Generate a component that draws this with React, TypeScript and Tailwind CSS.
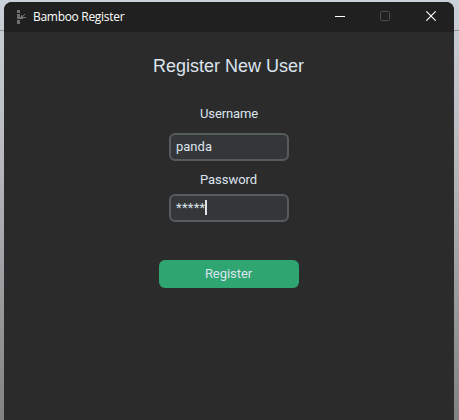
function AppIcon() {
  return (
    <svg width="9" height="14" viewBox="0 0 9 14" shapeRendering="crispEdges" aria-hidden="true">
      <path d="M0 0h3v3H0zM0 4h3v5H0zM0 10h3v4H0z" fill="#707070" />
      <path d="M3 7h6v1H3zM4 5h1v2H4zM5 6h1v1H5zM6 5h1v1H6zM7 4h1v1H7zM3 8h3v1H3z" fill="#777" />
    </svg>
  );
}

function TitleBar() {
  return (
    <header className="flex h-[30px] items-center bg-[#202020] pl-[13px]">
      <AppIcon />
      <h1 className="ml-[7px] w-24 whitespace-nowrap font-['Open_Sans','Noto_Sans',sans-serif] text-[12px] leading-[30px] tracking-[-0.3px] text-white">
        Bamboo Register
      </h1>
      <div className="ml-auto flex">
        <button aria-label="Minimize" className="flex h-[30px] w-[45px] items-center justify-center">
          <svg width="10" height="10" shapeRendering="crispEdges">
            <path d="M0 4h10v1H0z" fill="#fff" />
          </svg>
        </button>
        <button aria-label="Maximize" className="flex h-[30px] w-[45px] items-center justify-center" disabled>
          <svg width="10" height="10" className="-mt-0.5">
            <rect x=".5" y=".5" width="9" height="9" rx="1" fill="none" stroke="#4d4d4d" />
          </svg>
        </button>
        <button aria-label="Close" className="flex h-[30px] w-[47px] items-center justify-center">
          <svg width="10" height="10" className="-mt-0.5">
            <path d="M.3.3l9.4 9.4M9.7.3L.3 9.7" stroke="#fff" strokeWidth="1.1" />
          </svg>
        </button>
      </div>
    </header>
  );
}

export default function App() {
  return (
    <div className="h-[420px] w-[459px] overflow-hidden bg-linear-to-b from-[#cbd1d9] via-[#b9bbbe] via-35% to-[#828284] pt-0.5 font-[Roboto,sans-serif] text-[13px] text-[#dce4ee]">
      <div className="flex justify-between">
        <div className="mt-7 h-px w-1 bg-[#929496]" />
        <main className="h-[418px] w-[450px] shrink-0 overflow-hidden rounded-t-lg bg-[#2b2b2b]">
          <TitleBar />
          <form className="flex flex-col items-center">
            <h2 className="mt-5 h-7 pr-px font-['Liberation_Sans',Arial,sans-serif] text-[18px] leading-7">
              Register New User
            </h2>
            <label className="mt-5 h-7 leading-7 tracking-[-0.12px]">Username</label>
            <div className="mt-[5px] flex h-7 w-[120px] items-center rounded-md border-2 border-[#565b5e] bg-[#343638] pl-[5px]">
              panda
            </div>
            <label className="mt-[5px] h-7 pr-px leading-7 tracking-[-0.05px]">Password</label>
            <div className="flex h-7 w-[120px] items-center rounded-md border-2 border-[#565b5e] bg-[#343638] pb-px pl-[5px]">
              <span className="w-[29px] tracking-[0.3px]">*****</span>
              <span className="h-[15px] w-0.5 bg-[#dce4ee]" />
            </div>
            <button type="button" className="mt-[38px] h-7 w-[140px] rounded-md bg-[#2fa572] pr-px leading-7 tracking-[-0.05px]">
              Register
            </button>
          </form>
        </main>
        <div className="mt-7 h-px w-[5px] bg-[#929496]" />
      </div>
    </div>
  );
}
